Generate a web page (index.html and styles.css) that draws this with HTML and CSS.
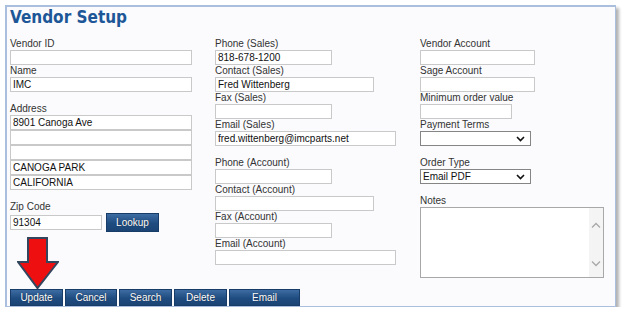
FILE: index.html
```html
<!doctype html>
<html>
    <head>
        <meta charset="utf-8" />
        <title>Vendor Setup</title>
        <link rel="stylesheet" href="styles.css">
    </head>
    <body>
        <div class="panel">
            <h1>Vendor Setup</h1>
            <form class="cols">
                <div class="col">
                    <label>Vendor ID</label>
                    <input type="text" class="w182" value="" />
                    <label>Name</label>
                    <input type="text" class="w182" value="IMC" />
                    <label class="gap">Address</label>
                    <div class="stack">
                        <input type="text" class="w182" value="8901 Canoga Ave" />
                        <input type="text" class="w182" value="" />
                        <input type="text" class="w182" value="" />
                        <input type="text" class="w182" value="CANOGA PARK" />
                        <input type="text" class="w182" value="CALIFORNIA" />
                    </div>
                    <label class="gap">Zip Code</label>
                    <div class="zip">
                        <input type="text" class="w92" value="91304" />
                        <button type="button" class="btn lookup">Lookup</button>
                    </div>
                </div>
                <div class="col">
                    <label>Phone (Sales)</label>
                    <input type="text" class="w117" value="818-678-1200" />
                    <label>Contact (Sales)</label>
                    <input type="text" class="w159" value="Fred Wittenberg" />
                    <label>Fax (Sales)</label>
                    <input type="text" class="w117" value="" />
                    <label>Email (Sales)</label>
                    <input type="text" class="w181" value="fred.wittenberg@imcparts.net" />
                    <label class="gap">Phone (Account)</label>
                    <input type="text" class="w117" value="" />
                    <label>Contact (Account)</label>
                    <input type="text" class="w159" value="" />
                    <label>Fax (Account)</label>
                    <input type="text" class="w117" value="" />
                    <label>Email (Account)</label>
                    <input type="text" class="w181" value="" />
                </div>
                <div class="col">
                    <label>Vendor Account</label>
                    <input type="text" class="w115" value="" />
                    <label>Sage Account</label>
                    <input type="text" class="w115" value="" />
                    <label>Minimum order value</label>
                    <input type="text" class="w92" value="" />
                    <label>Payment Terms</label>
                    <select class="w111"><option></option></select>
                    <label class="gap">Order Type</label>
                    <select class="w111"><option>Email PDF</option></select>
                    <label class="gap">Notes</label>
                    <div class="notes">
                        <textarea></textarea>
                        <div class="scroll">
                            <svg width="10" height="6" viewBox="0 0 10 6"><path d="M1 5.5 L5 1.5 L9 5.5" fill="none" stroke="#a8a8a8" stroke-width="1.3" /></svg>
                            <svg width="10" height="6" viewBox="0 0 10 6"><path d="M1 0.5 L5 4.5 L9 0.5" fill="none" stroke="#a8a8a8" stroke-width="1.3" /></svg>
                        </div>
                    </div>
                </div>
            </form>
            <div class="actions">
                <button type="button" class="btn w53">Update</button>
                <button type="button" class="btn w52">Cancel</button>
                <button type="button" class="btn w53">Search</button>
                <button type="button" class="btn w53">Delete</button>
                <button type="button" class="btn w71">Email</button>
            </div>
            <svg class="arrow" width="42" height="53" viewBox="0 0 42 53">
                <polygon points="11,1 30,1 30,25 41,25 20.5,51 1,25 11,25" fill="#ee1010" stroke="#34465e" stroke-width="2" stroke-linejoin="miter" />
            </svg>
        </div>
    </body>
</html>
```

FILE: styles.css
```css
html, body {
    margin: 0px;
    padding: 0px;
    background-color: white;
}

body {
    font-family: "Liberation Sans", Arial, sans-serif;
    font-size: 10px;
    color: #333;
}

.panel {
    position: relative;
    box-sizing: border-box;
    width: 611px;
    height: 302px;
    margin: 5px 0 0 5px;
    border: 2px solid #a9bfdd;
    border-width: 2px 1px 1px 2px;
    background-color: #fbfbfd;
    box-shadow: 3px 3px 3px rgba(0, 0, 0, 0.3);
    display: flex;
    flex-direction: column;
}

h1 {
    margin: 0px;
    padding: 0 0 0 3px;
    font-family: "DejaVu Sans Condensed", "DejaVu Sans", sans-serif;
    font-weight: bold;
    font-size: 17px;
    line-height: 20px;
    color: #1d5797;
}

.cols {
    display: grid;
    grid-template-columns: 205px 205px 1fr;
    margin: 11px 0 0 0;
    padding-left: 3px;
}

.col {
    display: flex;
    flex-direction: column;
    align-items: flex-start;
}

label {
    display: block;
    height: 12px;
    line-height: 12px;
}

label.gap {
    margin-top: 11px;
}

input, select, textarea {
    box-sizing: border-box;
    font-family: "Liberation Sans", Arial, sans-serif;
    font-size: 10px;
    color: #111;
    margin: 0px;
}

input {
    height: 15px;
    padding: 0 2px;
    border: 1px solid #c9c9c9;
    background-color: white;
    outline: none;
}

.stack {
    display: flex;
    flex-direction: column;
}

select {
    appearance: none;
    -webkit-appearance: none;
    height: 15px;
    padding: 0 2px;
    border: 1px solid #858585;
    border-radius: 0px;
    background: white url("data:image/svg+xml,%3Csvg xmlns='http://www.w3.org/2000/svg' width='9' height='6' viewBox='0 0 9 6'%3E%3Cpath d='M1 1 L4.5 4.5 L8 1' fill='none' stroke='%23111' stroke-width='1.6'/%3E%3C/svg%3E") no-repeat right 5px center;
    line-height: 13px;
}

.zip {
    display: flex;
    align-items: center;
    gap: 4px;
}

.w182 { width: 182px; }
.w181 { width: 181px; }
.w159 { width: 159px; }
.w117 { width: 117px; }
.w115 { width: 115px; }
.w111 { width: 111px; }
.w92 { width: 92px; }
.w71 { width: 71px; }
.w53 { width: 53px; }
.w52 { width: 52px; }

.notes {
    display: flex;
    box-sizing: border-box;
    width: 184px;
    height: 71px;
    border: 1px solid #a8a8a8;
    background-color: white;
}

.notes textarea {
    flex: 1;
    border: none;
    resize: none;
    outline: none;
    background-color: white;
}

.scroll {
    width: 14px;
    background-color: #f4f4f4;
    display: flex;
    flex-direction: column;
    justify-content: space-between;
    align-items: center;
    padding: 14px 0 10px 0;
}

.btn {
    box-sizing: border-box;
    height: 17px;
    padding: 0px;
    border: 1px solid #173c68;
    background: linear-gradient(#3d6ca3, #1f4c80 55%, #1b4475);
    color: white;
    font-family: "Liberation Sans", Arial, sans-serif;
    font-size: 10px;
    text-shadow: 0 0 1px rgba(0, 0, 0, 0.6);
    cursor: pointer;
}

.lookup {
    width: 53px;
    height: 19px;
}

.actions {
    margin-top: auto;
    display: flex;
    gap: 2px;
    padding-left: 3px;
}

.arrow {
    position: absolute;
    left: 10px;
    top: 230px;
}
```
